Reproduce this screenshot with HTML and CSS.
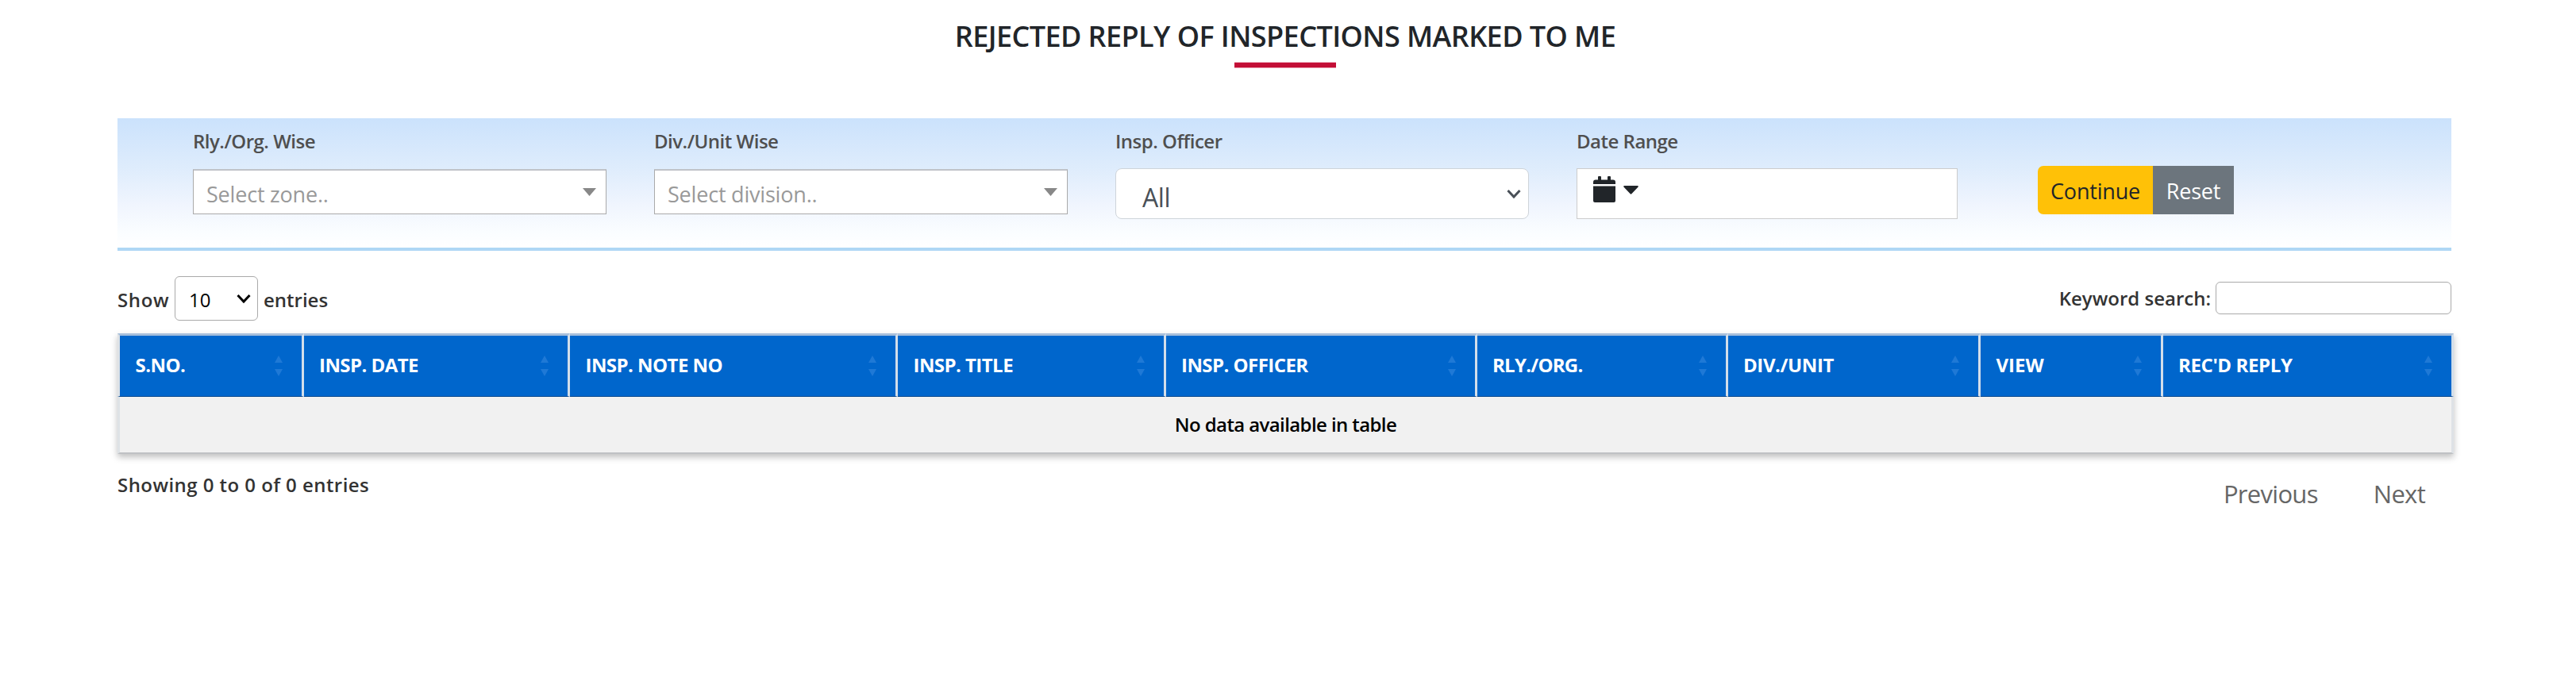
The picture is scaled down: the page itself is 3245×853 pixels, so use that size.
FILE: index.html
```html
<!DOCTYPE html>
<html lang="en">
<head>
<meta charset="utf-8">
<title>Rejected Reply of Inspections Marked To Me</title>
<link rel="stylesheet" href="styles.css">
</head>
<body>
<main class="page">
  <h1 class="title">REJECTED REPLY OF INSPECTIONS MARKED TO ME</h1>
  <div class="title-rule"></div>

  <form class="filters">
    <div class="field">
      <div class="label">Rly./Org. Wise</div>
      <div class="combo"><span>Select zone..</span>
        <svg class="combo-arrow" viewBox="0 0 17 10"><path d="M0 0H17L8.5 10Z"/></svg></div>
    </div>
    <div class="field">
      <div class="label">Div./Unit Wise</div>
      <div class="combo"><span>Select division..</span>
        <svg class="combo-arrow" viewBox="0 0 17 10"><path d="M0 0H17L8.5 10Z"/></svg></div>
    </div>
    <div class="field">
      <div class="label">Insp. Officer</div>
      <div class="select"><span>All</span>
        <svg class="chevron" viewBox="0 0 18 12"><path d="M1.5 2L9 10L16.500 2"/></svg></div>
    </div>
    <div class="field">
      <div class="label">Date Range</div>
      <div class="date">
        <svg class="calendar" viewBox="0 0 28 33"><path d="M0 12.500H28V31Q28 33 26 33H2Q0 33 0 31ZM0 10V7.500Q0 4.500 3 4.500H6V1Q6 0 7 0H9Q10 0 10 1V4.500H18V1Q18 0 19 0H21Q22 0 22 1V4.500H25Q28 4.500 28 7.500V10Z"/></svg>
        <svg class="caret" viewBox="0 0 19 11"><path d="M1 0H18Q19.500 .6 18.400 1.700L10.300 10.300Q9.500 11 8.700 10.300L.6 1.700Q-.5 .6 1 0Z"/></svg>
      </div>
    </div>
    <div class="buttons">
      <button type="button" class="btn btn-continue">Continue</button><button type="button" class="btn btn-reset">Reset</button>
    </div>
  </form>

  <div class="toolbar">
    <div class="length"><span class="show">Show</span>
      <div class="length-select"><span>10</span>
        <svg class="chevron-sm" viewBox="0 0 18 12"><path d="M1.500 2L9 10L16.500 2"/></svg></div>
      <span>entries</span></div>
    <label class="search">Keyword search:<input class="search-input" type="text"></label>
  </div>

  <table class="grid">
    <colgroup><col class="c1"><col class="c2"><col class="c3"><col class="c4"><col class="c5"><col class="c6"><col class="c7"><col class="c8"><col class="c9"></colgroup>
    <thead>
      <tr>
        <th><div class="head"><span class="tight">S.NO.</span><svg class="sort" viewBox="0 0 10 26"><path d="M5 0L10 9H0ZM0 17H10L5 26Z"/></svg></div></th>
        <th><div class="head"><span class="tight">INSP. DATE</span><svg class="sort" viewBox="0 0 10 26"><path d="M5 0L10 9H0ZM0 17H10L5 26Z"/></svg></div></th>
        <th><div class="head"><span class="tight">INSP. NOTE NO</span><svg class="sort" viewBox="0 0 10 26"><path d="M5 0L10 9H0ZM0 17H10L5 26Z"/></svg></div></th>
        <th><div class="head"><span class="tight">INSP. TITLE</span><svg class="sort" viewBox="0 0 10 26"><path d="M5 0L10 9H0ZM0 17H10L5 26Z"/></svg></div></th>
        <th><div class="head"><span class="tight">INSP. OFFICER</span><svg class="sort" viewBox="0 0 10 26"><path d="M5 0L10 9H0ZM0 17H10L5 26Z"/></svg></div></th>
        <th><div class="head"><span class="tighter">RLY./ORG.</span><svg class="sort" viewBox="0 0 10 26"><path d="M5 0L10 9H0ZM0 17H10L5 26Z"/></svg></div></th>
        <th><div class="head"><span class="snug">DIV./UNIT</span><svg class="sort" viewBox="0 0 10 26"><path d="M5 0L10 9H0ZM0 17H10L5 26Z"/></svg></div></th>
        <th><div class="head"><span>VIEW</span><svg class="sort" viewBox="0 0 10 26"><path d="M5 0L10 9H0ZM0 17H10L5 26Z"/></svg></div></th>
        <th><div class="head"><span class="snug">REC'D REPLY</span><svg class="sort" viewBox="0 0 10 26"><path d="M5 0L10 9H0ZM0 17H10L5 26Z"/></svg></div></th>
      </tr>
    </thead>
    <tbody><tr><td class="empty" colspan="9">No data available in table</td></tr></tbody>
  </table>

  <div class="footer">
    <div class="info">Showing 0 to 0 of 0 entries</div>
    <div class="pager"><span>Previous</span><span>Next</span></div>
  </div>
</main>
</body>
</html>
```
FILE: styles.css
```css
* { box-sizing: border-box; }
body {
  margin: 0;
  background: #fff;
  font-family: "Open Sans", "Noto Sans", sans-serif;
  color: #333;
}
svg { display: block; flex: none; }
.page { padding: 20px 154px 0 148px; }

.title {
  margin: 0;
  width: 2942px;
  text-align: center;
  font-size: 36px;
  line-height: 51px;
  font-weight: 600;
  letter-spacing: -0.57px;
  color: #212529;
}
.title-rule {
  width: 128px;
  height: 8px;
  margin: 7px 0 63px 1407px;
  background: #c30e36;
  border-top: 1px solid #eeb0be;
  border-bottom: 1px solid #eeb0be;
}

.filters {
  display: grid;
  grid-template-columns: repeat(4, 521px) auto;
  column-gap: 60px;
  align-items: start;
  width: 2940px;
  height: 167px;
  padding: 14px 0 0 95px;
  border-bottom: 4px solid #afd7f5;
  background: linear-gradient(#cbe2fc 0%, #deecfc 38%, #f0f5fe 67%, #fafdff 88%, #fff 100%);
}
.label {
  height: 29px;
  line-height: 29px;
  margin-bottom: 20px;
  font-size: 24px;
  font-weight: 600;
  letter-spacing: -0.5px;
  color: #4f4f4f;
}
.combo {
  display: flex;
  align-items: center;
  justify-content: space-between;
  height: 57px;
  margin-top: 21px;
  padding: 5px 12px 0 16px;
  border: 1px solid #aaa;
  border-top: 2px solid #c0c3c8;
  background: #fff;
  font-size: 27px;
  letter-spacing: -0.2px;
  color: #999;
}
.combo-arrow { width: 17px; height: 10px; margin-top: -6px; fill: #888; }
.select {
  display: flex;
  align-items: center;
  justify-content: space-between;
  height: 64px;
  padding: 9px 9px 0 33px;
  border: 1px solid #ced4da;
  border-radius: 8px;
  background: #fff;
  font-size: 32px;
  letter-spacing: -0.4px;
  color: #495057;
}
.chevron, .chevron-sm { width: 18px; height: 12px; fill: none; stroke: #495057; stroke-width: 3; }
.chevron { margin-top: -9px; }
.date {
  display: flex;
  gap: 10px;
  width: 480px;
  height: 64px;
  padding: 9px 20px;
  border: 1px solid #ccc;
  background: #fff;
}
.calendar { width: 28px; height: 33px; fill: #212529; }
.caret { width: 19px; height: 11px; margin-top: 12px; fill: #212529; }

.buttons { display: flex; margin-top: 46px; }
.btn {
  height: 61px;
  padding: 1px 0 0;
  border: 0;
  font-family: inherit;
  font-size: 27px;
  letter-spacing: -0.2px;
}
.btn-continue { width: 145px; background: #ffc107; color: #212529; border-radius: 7px 0 0 7px; }
.btn-reset { width: 102px; background: #6c757d; color: #fff; }

.toolbar {
  display: flex;
  justify-content: space-between;
  width: 2940px;
  height: 72px;
  margin-top: 32px;
  font-size: 24px;
  font-weight: 600;
}
.length { display: flex; align-items: center; height: 56px; }
.length > span { padding-top: 2px; }
.show { width: 72px; letter-spacing: 0.6px; }
.length-select {
  display: flex;
  align-items: center;
  justify-content: space-between;
  width: 105px;
  height: 56px;
  margin-right: 7px;
  padding: 2px 8px 0 17px;
  border: 1px solid #aaa;
  border-radius: 6px;
  font-size: 24px;
  font-weight: 400;
  color: #000;
}
.chevron-sm { stroke: #000; margin-top: -3px; }
.search { display: flex; align-items: center; gap: 6px; height: 41px; margin-top: 7px; }
.search-input {
  width: 297px;
  height: 41px;
  border: 1px solid #aaa;
  border-radius: 6px;
  background: #fff;
}

.grid {
  width: 2943px;
  table-layout: fixed;
  border-collapse: separate;
  border-spacing: 0;
  box-shadow: 0 4px 8px rgba(0, 0, 0, 0.25);
}
.c1 { width: 234.5px; }
.c2 { width: 335.5px; }
.c3 { width: 413px; }
.c4 { width: 337.5px; }
.c5 { width: 392px; }
.c6 { width: 316px; }
.c7 { width: 318.5px; }
.c8 { width: 229.5px; }
.c9 { width: 366.5px; }
.grid th {
  height: 80px;
  padding: 0;
  border-top: 3px solid #a6bedb;
  border-right: 3px solid #d3deea;
  border-bottom: 1px solid #04478f;
  background: #0066cc;
}
.grid th:first-child { border-left: 3px solid #dee2e6; }
.head {
  display: flex;
  align-items: center;
  justify-content: space-between;
  height: 76px;
  padding: 0 24px 3px 19.5px;
  font-size: 24px;
  font-weight: 700;
  color: #fff;
}
.snug { letter-spacing: -0.4px; }
.tight { letter-spacing: -0.55px; }
.tighter { letter-spacing: -0.75px; }
.sort { width: 10px; height: 26px; margin-top: 2px; fill: #1f79d6; }
.empty {
  height: 72px;
  padding: 0 0 2px;
  border: solid #dee2e6;
  border-width: 0 3px 2px;
  border-bottom-color: #bfc1c4;
  background: #f1f1f1;
  text-align: center;
  font-size: 24px;
  font-weight: 600;
  letter-spacing: -0.6px;
  color: #000;
}

.footer {
  display: flex;
  justify-content: space-between;
  width: 2940px;
  padding: 21px 33px 0 0;
}
.info { font-size: 24px; line-height: 36px; font-weight: 600; letter-spacing: 0.45px; }
.pager {
  display: flex;
  gap: 70px;
  margin-top: 11px;
  font-size: 31px;
  line-height: 36px;
  letter-spacing: -0.7px;
  color: #666;
}
```
